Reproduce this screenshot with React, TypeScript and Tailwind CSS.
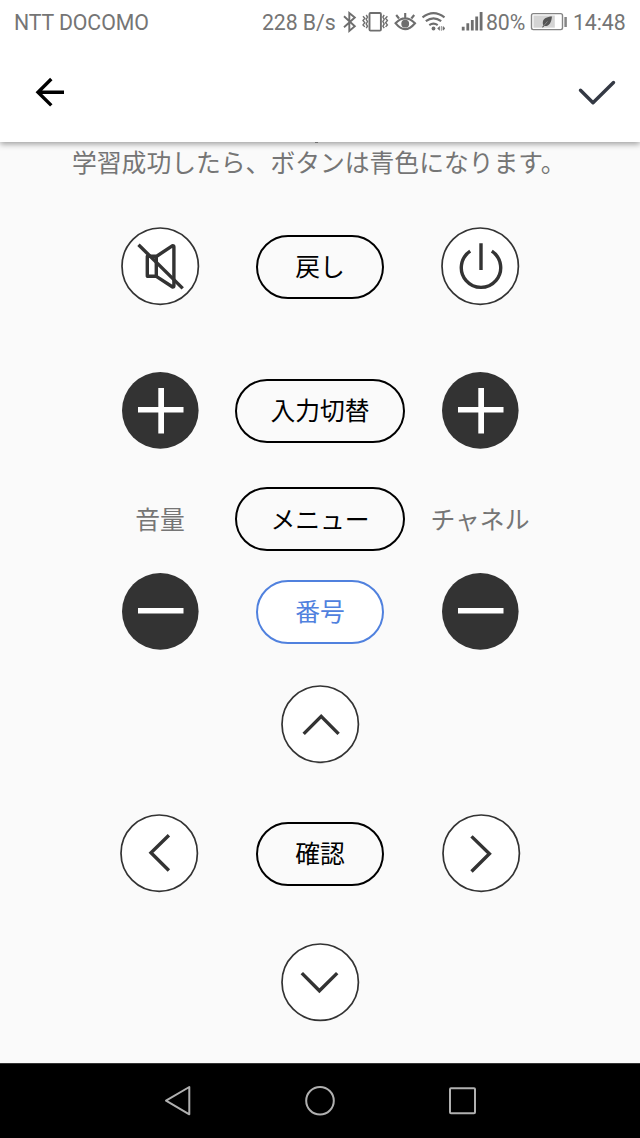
import React from "react";

export interface RoundProps {
    label: string;
    children: React.ReactNode;
}

export interface PillProps {
    text: string;
    wide?: boolean;
    active?: boolean;
}

export default function App() {
    return (
        <div className="flex h-[1138px] w-[640px] flex-col overflow-hidden bg-[#fafafa] font-['Roboto','Noto_Sans_CJK_JP',sans-serif]">
            <header className="relative z-10 h-[142px] shrink-0 bg-white shadow-[0_2px_6px_0_rgba(0,0,0,0.38)]">
                <StatusBar />
                <div className="flex h-[96px] items-center justify-between pr-6 pl-[34px]">
                    <button aria-label="back">
                        <svg width="32" height="32" viewBox="0 0 32 32" fill="none" stroke="#000" strokeWidth="3.4">
                            <path d="M17.3 2 4 15.2l13.3 13.2M4 15.2h26" />
                        </svg>
                    </button>
                    <button aria-label="done">
                        <svg
                            width="38"
                            height="30"
                            viewBox="0 0 38 30"
                            fill="none"
                            stroke="#343944"
                            strokeWidth="3.4"
                            strokeLinecap="round"
                            strokeLinejoin="round"
                        >
                            <path d="M2.5 12.2 15 24.7 35.5 4.5" />
                        </svg>
                    </button>
                </div>
            </header>

            <main className="flex h-[921px] shrink-0 flex-col font-['Noto_Sans_CJK_JP',sans-serif] text-[24.8px]">
                <span className="ml-[315px] h-px w-[3px] shrink-0 bg-[#999]" />
                <p className="h-9 pl-[72px] text-[24.8px] leading-9 whitespace-nowrap text-[#757575]">
                    学習成功したら、ボタンは青色になります。
                </p>

                <div className="mx-auto mt-[48px] grid h-[79px] w-[480px] grid-cols-3 place-items-center">
                    <RoundButton label="mute">
                        <path d="M26.3 29.3h9v20h-9zM35.3 29.5 51.6 18.7q1.3 0 1.3 1.3v38.7q0 1.3-1.3 1.3L35.3 49.3" strokeLinejoin="round" />
                        <path d="M17.5 17.7 61.7 61.4" />
                    </RoundButton>
                    <PillButton text="戻し" />
                    <RoundButton label="power">
                        <path d="M40 16.3V43M29.2 24.2a19.7 19.7 0 1 0 21.6 0" />
                    </RoundButton>
                </div>

                <div className="mx-auto mt-[66px] grid h-[77px] w-[480px] grid-cols-3 place-items-center">
                    <SolidButton label="volume up" plus />
                    <PillButton text="入力切替" wide />
                    <SolidButton label="channel up" plus />
                </div>

                <div className="mx-auto mt-[38px] grid h-16 w-[480px] grid-cols-3 place-items-center">
                    <span className="whitespace-nowrap text-[#757575]">音量</span>
                    <PillButton text="メニュー" wide />
                    <span className="whitespace-nowrap text-[#757575]">チャネル</span>
                </div>

                <div className="mx-auto mt-[22px] grid h-[77px] w-[480px] grid-cols-3 place-items-center">
                    <SolidButton label="volume down" />
                    <PillButton text="番号" active />
                    <SolidButton label="channel down" />
                </div>

                <div className="mt-[35px] flex h-[79px] justify-center">
                    <RoundButton label="up">
                        <path d="M22.7 48.9 40.2 31.3 57.6 48.9" />
                    </RoundButton>
                </div>

                <div className="mx-auto mt-[50px] flex h-[79px] w-[401px] items-center justify-between">
                    <RoundButton label="left">
                        <path d="M48.9 21.2 31 38.7l17.9 17.8" />
                    </RoundButton>
                    <PillButton text="確認" />
                    <RoundButton label="right">
                        <path d="M29.5 22.4 47.4 39.8 29.5 57.5" />
                    </RoundButton>
                </div>

                <div className="mt-[50px] flex h-[79px] justify-center">
                    <RoundButton label="down">
                        <path d="M20.8 30.1 38.4 47.8 56.2 30.1" />
                    </RoundButton>
                </div>
            </main>

            <NavigationBar />
        </div>
    );
}

export function RoundButton({ label, children }: RoundProps) {
    return (
        <button aria-label={label} className="size-[79px]">
            <svg width="79" height="79" viewBox="0 0 79 79" fill="none" stroke="#333" strokeWidth="3.4">
                <circle cx="39.2" cy="39.2" r="38.2" fill="#fff" strokeWidth="1.7" />
                {children}
            </svg>
        </button>
    );
}

export function SolidButton({ label, plus }: { label: string; plus?: boolean }) {
    return (
        <button aria-label={label} className="size-[77px]">
            <svg width="77" height="77" viewBox="0 0 77 77" fill="#fff">
                <circle cx="38.3" cy="38.4" r="38.3" fill="#333" />
                <path d="M16 35h45.5v5.6H16z" />
                {plus && <path d="M36.3 16H42v45.5h-5.7z" />}
            </svg>
        </button>
    );
}

export function PillButton({ text, wide, active }: PillProps) {
    const width = wide ? "w-[170px]" : "w-32";
    const color = active ? "border-[#5081de] bg-white text-[#5081de]" : "border-black text-black";
    return (
        <button className={`flex h-16 shrink-0 items-center justify-center rounded-full border-2 pb-px whitespace-nowrap ${width} ${color}`}>
            {text}
        </button>
    );
}

function StatusBar() {
    return (
        <div className="flex h-[45px] items-center pl-[14px] text-[21.3px] tracking-[-0.1px] whitespace-nowrap text-[#757575]">
            <span className="w-[248px]">NTT DOCOMO</span>
            <span className="w-20">228 B/s</span>
            {/* bluetooth, vibrate, eye comfort, wifi, signal */}
            <svg width="145" height="45" viewBox="342 0 145 45" className="-mr-[1px] shrink-0" fill="none" stroke="#6e6e6e" strokeWidth="1.9">
                <path d="m344 16.3 10.8 10-5.5 4.7V13l5.5 4.5-10.8 9.7" />
                <rect x="369.5" y="13" width="11.4" height="17.6" rx="1" />
                <path d="m363 16.3 1.8 2-1.8 2.2 1.8 2.2-1.8 2.2 1.8 2M366.2 15l1.3 2-1.3 2.3 1.3 2.3-1.3 2.3 1.3 2.3-1.3 2M387.4 16.3l-1.8 2 1.8 2.2-1.8 2.2 1.8 2.2-1.8 2M384.2 15l-1.3 2 1.3 2.3-1.3 2.3 1.3 2.3-1.3 2.3 1.3 2" strokeWidth="1.4" />
                <path d="M395.5 23.2Q405 13.5 415 23.2 405 35 395.5 23.2ZM405.2 17.5V13M399 18.5l-2.8-3.5M411.4 18.5l2.8-3.5" strokeWidth="2.1" />
                <circle cx="405.2" cy="23.7" r="3.9" fill="#6e6e6e" stroke="none" />
                <path d="M422.5 17.3q11-8.5 22 0M425.8 21.2q7.7-5.8 15.4 0M429.3 25.2q4.2-3.2 8.4 0" strokeWidth="2.1" />
                <circle cx="433.5" cy="28.5" r="1.9" fill="#6e6e6e" stroke="none" />
                <path d="M437.6 28.4l2-1.8v3.6zM441.4 26v4.8M445 28.4l-2-1.8v3.6z" fill="#6e6e6e" strokeWidth=".7" />
                <path d="M463.2 30.5v-3.8M467.8 30.5v-7.3M472.3 30.5V20M476.7 30.5v-14M481.1 30.5V12" strokeWidth="2.8" />
            </svg>
            <span className="w-[44px]">80%</span>
            <svg width="44" height="45" viewBox="530 0 44 45" className="shrink-0" fill="none" stroke="#858585" strokeWidth="1.4">
                <rect x="531.5" y="13.6" width="31" height="16" rx="1.8" />
                <path d="M533.5 15.5h21.3v12.2h-21.3z" fill="#d4d4d4" stroke="none" />
                <path d="M565.6 17v10" strokeWidth="2.5" />
                <path d="M552 16.2c-5 1-8.8 1.8-9.2 6-.1 1.4.2 2.3.6 3l-1.4 2 1 .3 1.3-1.5c5.3.3 7-3.3 7.7-9.8Z" fill="#555" stroke="none" />
                <path d="m543.5 26 4-4.6" stroke="#bbb" strokeWidth=".5" />
            </svg>
            <span className="-ml-[1px]">14:48</span>
        </div>
    );
}

function NavigationBar() {
    return (
        <nav className="flex h-[75px] shrink-0 items-center justify-between border-t border-[#333] bg-black pr-[162px] pl-[162px]">
            <svg width="32" height="32" viewBox="0 0 32 32" fill="none" stroke="#b0b0b0" strokeWidth="2" strokeLinejoin="round">
                <path d="M4 15.7 27.3 2v27.3Z" />
            </svg>
            <svg width="32" height="32" viewBox="0 0 32 32" fill="none" stroke="#b0b0b0" strokeWidth="2">
                <circle cx="16" cy="15.7" r="13.8" />
            </svg>
            <svg width="32" height="32" viewBox="0 0 32 32" fill="none" stroke="#b0b0b0" strokeWidth="2">
                <rect x="4" y="3.2" width="25" height="25" rx="1" />
            </svg>
        </nav>
    );
}
